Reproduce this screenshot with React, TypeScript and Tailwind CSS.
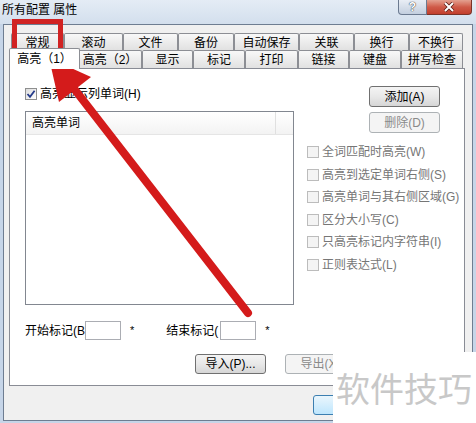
import React from "react";

const row1: [string, number][] = [
  ["常规", 53],
  ["滚动", 59],
  ["文件", 55],
  ["备份", 56],
  ["自动保存", 65],
  ["关联", 55],
  ["换行", 55],
  ["不换行", 54],
];

const row2: [string, number][] = [
  ["高亮（1）", 67],
  ["高亮（2）", 64],
  ["显示", 51],
  ["标记", 52],
  ["打印", 53],
  ["链接", 51],
  ["键盘", 52],
  ["拼写检查", 62],
];

const options = [
  "全词匹配时高亮(W)",
  "高亮到选定单词右侧(S)",
  "高亮单词与其右侧区域(G)",
  "区分大小写(C)",
  "只高亮标记内字符串(I)",
  "正则表达式(L)",
];

const widthClass: Record<number, string> = {
  51: "w-[51px]",
  52: "w-[52px]",
  53: "w-[53px]",
  54: "w-[54px]",
  55: "w-[55px]",
  56: "w-[56px]",
  59: "w-[59px]",
  62: "w-[62px]",
  64: "w-[64px]",
  65: "w-[65px]",
  67: "w-[67px]",
};

const Tab = ({ label, w }: { label: string; w: number }) => (
  <div
    className={`${widthClass[w]} h-full flex items-center justify-center pt-[1px] border border-b-0 border-[#8c8e94] rounded-t-[2px] bg-linear-to-b from-[#f8f8f8] to-[#e1e1e1] text-[12px] leading-none text-black`}
  >
    {label}
  </div>
);

const Btn = ({ label, disabled }: { label: string; disabled?: boolean }) => (
  <div
    className={`w-[71px] h-[21px] flex items-center justify-center rounded-[3px] border text-[12px] leading-none ${
      disabled
        ? "border-[#adb2b5] bg-[#f4f4f4] text-[#8a8a8a]"
        : "border-[#707070] bg-linear-to-b from-[#f4f4f4] via-[#e8e8e8] to-[#d6d6d6] text-black"
    }`}
  >
    {label}
  </div>
);

const App = () => {
  return (
    <div className="relative w-[476px] h-[423px] overflow-hidden bg-[#c6d5e8] font-['Liberation_Sans','Noto_Sans_CJK_SC',sans-serif]">
      {/* title bar */}
      <div className="h-[24px] flex items-start justify-between bg-linear-to-b from-[#e4ecf5] to-[#d3dfed]">
        <div className="pl-[2px] pt-[3px] text-[12px] leading-[14px] text-black">所有配置 属性</div>
        <div className="flex mr-[4px]">
          <div className="w-[29px] h-[15px] flex items-center justify-center border border-t-0 border-[#6b7a90] rounded-bl-[4px] bg-linear-to-b from-[#e9eef5] to-[#c3cfdf] text-[12px] font-bold leading-none text-white [text-shadow:0_0_1px_#333,0_0_1px_#333]">
            ?
          </div>
          <div className="w-[45px] h-[15px] flex items-center justify-center border border-l-0 border-t-0 border-[#7a3328] rounded-br-[4px] bg-linear-to-b from-[#e3a090] via-[#cf5a48] to-[#c23f2d]">
            <svg width="12" height="10" viewBox="0 0 12 10">
              <path d="M2 1 L10 9 M10 1 L2 9" stroke="#5b1e16" strokeWidth="3.6" />
              <path d="M2 1 L10 9 M10 1 L2 9" stroke="#ffffff" strokeWidth="2" />
            </svg>
          </div>
        </div>
      </div>

      {/* client area */}
      <div className="ml-[3px] w-[470px] h-[397px] border border-[#6e7d91] bg-[#f0f0f0] pl-[5px] pt-[8px]">
        <div className="flex h-[17px] pl-[2px]">
          {row1.map(([l, w]) => (
            <Tab key={l} label={l} w={w} />
          ))}
        </div>
        <div className="flex h-[18px] pl-[2px]">
          <div className="relative z-10 -ml-[2px] -mr-[2px] -mt-[2px] w-[71px] h-[21px] flex items-start justify-center pt-[4px] border border-b-0 border-[#8c8e94] rounded-t-[2px] bg-white text-[12px] leading-none text-black">
            高亮（1）
          </div>
          {row2.slice(1).map(([l, w]) => (
            <Tab key={l} label={l} w={w} />
          ))}
        </div>

        {/* tab page */}
        <div className="w-[456px] h-[318px] border border-[#898c95] bg-white pt-[18px] pl-[15px] text-[12px] leading-none text-black">
          <div className="flex">
            <div className="w-[269px]">
              <div className="flex items-center h-[13px]">
                <div className="w-[12px] h-[12px] border border-[#8e8f8f] bg-linear-to-br from-[#dcdcdc] to-white flex items-center justify-center">
                  <svg width="10" height="10" viewBox="0 0 10 10">
                    <path d="M1.5 5 L4 7.8 L8.6 1.8" stroke="#233a8a" strokeWidth="1.8" fill="none" />
                  </svg>
                </div>
                <span className="ml-[3px]">高亮显示列单词(H)</span>
              </div>
              <div className="mt-[11px] h-[194px] border border-[#828790] bg-white">
                <div className="flex h-[23px] border-b border-[#e5e5e5] bg-linear-to-b from-white to-[#f3f3f3]">
                  <div className="w-[250px] h-full flex items-center pl-[6px] border-r border-[#e0e0e0]">高亮单词</div>
                </div>
              </div>
            </div>
            <div className="ml-[13px]">
              <div className="ml-[62px] -mt-[1px] flex flex-col gap-[5px]">
                <Btn label="添加(A)" />
                <Btn label="删除(D)" disabled />
              </div>
              <div className="mt-[8px] flex flex-col">
                {options.map((o) => (
                  <div key={o} className="h-[22.5px] flex items-center text-[#767676] whitespace-nowrap">
                    <div className="w-[12px] h-[12px] border border-[#bcbcbc] bg-[#f4f4f4]" />
                    <span className="ml-[3px]">{o}</span>
                  </div>
                ))}
              </div>
            </div>
          </div>

          <div className="mt-[16px] flex items-center h-[19px]">
            <span className="w-[60px] whitespace-nowrap">开始标记(B)</span>
            <div className="relative w-[36px] h-[19px] border border-[#abadb3] bg-white" />
            <span className="ml-[9px] text-[11px]">*</span>
            <span className="ml-[32px] w-[54px] whitespace-nowrap">结束标记(</span>
            <div className="relative w-[36px] h-[19px] border border-[#abadb3] bg-white" />
            <span className="ml-[9px] text-[11px]">*</span>
          </div>

          <div className="mt-[14px] ml-[170px] flex gap-[19px]">
            <div className="w-[71px] h-[20px] flex items-center justify-center rounded-[3px] border border-[#707070] bg-linear-to-b from-[#f4f4f4] via-[#e8e8e8] to-[#d6d6d6]">
              导入(P)...
            </div>
            <div className="w-[71px] h-[20px] flex items-center justify-center rounded-[3px] border border-[#adb2b5] bg-[#f4f4f4] text-[#8a8a8a]">
              导出(X)
            </div>
          </div>
        </div>

        <div className="mt-[9px] ml-[304px] w-[75px] h-[20px] rounded-[3px] border border-[#3c7fb1] bg-linear-to-b from-[#eaf6fd] to-[#bee6fd]" />
      </div>

      {/* annotation: red box */}
      <div className="absolute left-[12px] top-[19px] w-[51px] h-[38px] border-[5px] border-[#d12323]" />

      {/* annotation: red arrow */}
      <svg className="absolute left-0 top-0" width="476" height="423" viewBox="0 0 476 423">
        <line x1="248" y1="313" x2="72" y2="86" stroke="#d41b1b" strokeWidth="8" strokeLinecap="round" />
        <polygon points="49,58 91,77 59,102" fill="#d41b1b" />
      </svg>

      {/* watermark */}
      <div className="absolute left-[333px] top-[352px] w-[143px] h-[71px] bg-white flex items-center pl-[3px]">
        <span className="whitespace-nowrap text-[34px] leading-none text-[#c8c8c8] font-['Noto_Sans_CJK_SC',sans-serif]">软件技巧</span>
      </div>
    </div>
  );
};

export default App;
